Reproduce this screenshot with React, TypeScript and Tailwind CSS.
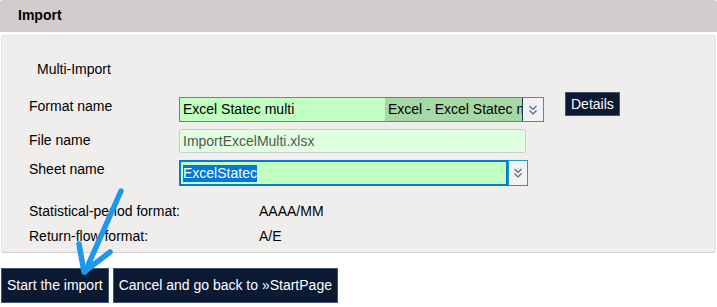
import React from "react";

/* Import page — multi-import form with format / file / sheet rows */

function Chevrons() {
  return (
    <svg width="10" height="12" viewBox="0 0 10 12" fill="none" stroke="#4a6a8a" strokeWidth="1.2">
      <path d="M1.5 2 L5 5.5 L8.5 2" />
      <path d="M1.5 6.5 L5 10 L8.5 6.5" />
    </svg>
  );
}

function Label({ children, className = "" }: { children: React.ReactNode; className?: string }) {
  return <div className={`w-[150px] shrink-0 leading-[16px] ${className}`}>{children}</div>;
}

export default function App() {
  return (
    <div className="relative w-[717px] h-[307px] bg-white text-[14px] text-black font-['Liberation_Sans',Arial,sans-serif]">
      {/* Header */}
      <div className="h-[32px] bg-[#d1cdcc] rounded-t-[3px] flex items-center px-[18px] pb-[1px] font-bold">
        Import
      </div>

      {/* Panel */}
      <div className="mt-[3px] mx-[1px] h-[218px] bg-[#efeeec] border border-[#e2e1df] border-b-[#d2d1cf] rounded-[3px] pl-[27px] pt-[25px]">
        <div className="pl-[8px] leading-[16px]">Multi-Import</div>

        {/* Format name */}
        <div className="flex items-start mt-[20px]">
          <Label className="pt-[1px]">Format name</Label>
          <div className="flex w-[365px] h-[25px] border border-[#1e9bd7] bg-[#c0ffc0]">
            <div className="w-[205px] pl-[3px] flex items-center overflow-hidden whitespace-nowrap">
              Excel Statec multi
            </div>
            <div className="w-[138px] pl-[3px] flex items-center overflow-hidden whitespace-nowrap bg-[#a6d9a6] border-r border-[#1b3b5b]">
              Excel - Excel Statec m
            </div>
            <div className="flex-1 flex items-center justify-center bg-[#f1f1f1]">
              <Chevrons />
            </div>
          </div>
          <button className="ml-[21px] -mt-[5px] h-[24px] px-[5px] bg-[#0b1932] border border-[#44546a] text-white leading-[16px]">
            Details
          </button>
        </div>

        {/* File name */}
        <div className="flex items-start mt-[7px]">
          <Label className="pt-[3px]">File name</Label>
          <div className="w-[347px] h-[24px] bg-[#e0ffe0] border border-[#c6ccd9] rounded-[2px] pl-[3px] flex items-center text-[#555555]">
            ImportExcelMulti.xlsx
          </div>
        </div>

        {/* Sheet name */}
        <div className="flex items-start mt-[7px]">
          <Label className="pt-[1px]">Sheet name</Label>
          <div className="flex h-[26px]">
            <div className="w-[329px] bg-[#c0ffc0] border-2 border-[#0a7acc] pl-[2px] flex items-center">
              <span className="bg-[#0078d7] text-white leading-[17px]">ExcelStatec</span>
            </div>
            <div className="w-[20px] border border-[#1e9bd7] bg-[#f1f1f1] flex items-center justify-center">
              <Chevrons />
            </div>
          </div>
        </div>

        {/* Formats */}
        <div className="flex mt-[17px] leading-[16px]">
          <div className="w-[230px]">Statistical-period format:</div>
          <div>AAAA/MM</div>
        </div>
        <div className="flex mt-[9px] leading-[16px]">
          <div className="w-[230px]">Return-flow format:</div>
          <div>A/E</div>
        </div>
      </div>

      {/* Actions */}
      <div className="flex gap-[4px] mt-[15px] ml-[1px]">
        <button className="h-[35px] px-[5px] bg-[#0b1932] border border-[#44546a] text-white text-[14px]">
          Start the import
        </button>
        <button className="h-[35px] px-[5px] bg-[#0b1932] border border-[#44546a] text-white text-[14px]">
          Cancel and go back to »StartPage
        </button>
      </div>

      {/* Annotation arrow */}
      <svg className="absolute left-0 top-0 pointer-events-none" width="717" height="307">
        <g stroke="#1e98e8" strokeWidth="5.5" strokeLinecap="round" strokeLinejoin="round" fill="none">
          <path d="M121 191 L85 272" />
          <path d="M79 244 L84 272 L110 252" />
        </g>
      </svg>
    </div>
  );
}
